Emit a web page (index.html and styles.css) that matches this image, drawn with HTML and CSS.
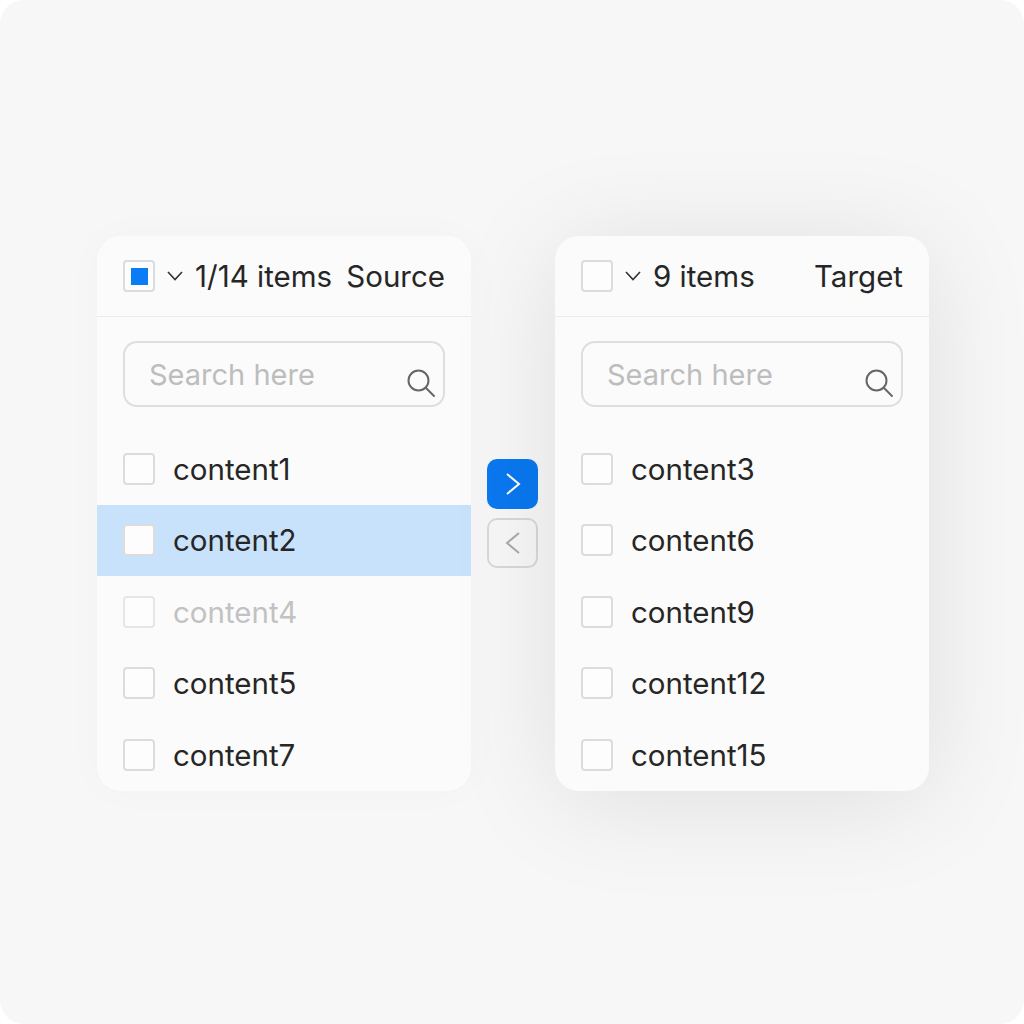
FILE: index.html
```html
<!DOCTYPE html>
<html lang="en">
<head>
    <meta charset="UTF-8">
    <meta name="viewport" content="width=device-width, initial-scale=1.0">
    <title>Transfer</title>
    <link rel="stylesheet" href="styles.css">
</head>
<body>
    <div class="frame">
        <div class="transfer">
            <!-- source list -->
            <div class="panel panel-source">
                <div class="panel-header">
                    <span class="checkbox checked"></span>
                    <svg class="chevron" width="18" height="12" viewBox="0 0 18 12"><path d="M2 2 L9 9.5 L16 2" fill="none" stroke="#333" stroke-width="1.6"/></svg>
                    <span class="count">1/14 items</span>
                    <span class="title">Source</span>
                </div>
                <div class="search">
                    <span class="placeholder">Search here</span>
                    <svg class="search-icon" width="32" height="32" viewBox="0 0 32 32"><circle cx="13.5" cy="13.5" r="10" fill="none" stroke="#666" stroke-width="2"/><path d="M21 21 L29 29" stroke="#666" stroke-width="2" stroke-linecap="round"/></svg>
                </div>
                <ul class="list">
                    <li class="item"><span class="checkbox"></span>content1</li>
                    <li class="item selected"><span class="checkbox"></span>content2</li>
                    <li class="item disabled"><span class="checkbox"></span>content4</li>
                    <li class="item"><span class="checkbox"></span>content5</li>
                    <li class="item"><span class="checkbox"></span>content7</li>
                </ul>
            </div>

            <div class="actions">
                <button class="move move-right">
                    <svg width="20" height="24" viewBox="0 0 20 24"><path d="M4 2 L16 12 L4 22" fill="none" stroke="#fff" stroke-width="2"/></svg>
                </button>
                <button class="move move-left">
                    <svg width="20" height="24" viewBox="0 0 20 24"><path d="M16 2 L4 12 L16 22" fill="none" stroke="#aaa" stroke-width="2"/></svg>
                </button>
            </div>

            <!-- target list -->
            <div class="panel panel-target">
                <div class="panel-header">
                    <span class="checkbox"></span>
                    <svg class="chevron" width="18" height="12" viewBox="0 0 18 12"><path d="M2 2 L9 9.5 L16 2" fill="none" stroke="#333" stroke-width="1.6"/></svg>
                    <span class="count">9 items</span>
                    <span class="title">Target</span>
                </div>
                <div class="search">
                    <span class="placeholder">Search here</span>
                    <svg class="search-icon" width="32" height="32" viewBox="0 0 32 32"><circle cx="13.5" cy="13.5" r="10" fill="none" stroke="#666" stroke-width="2"/><path d="M21 21 L29 29" stroke="#666" stroke-width="2" stroke-linecap="round"/></svg>
                </div>
                <ul class="list">
                    <li class="item"><span class="checkbox"></span>content3</li>
                    <li class="item"><span class="checkbox"></span>content6</li>
                    <li class="item"><span class="checkbox"></span>content9</li>
                    <li class="item"><span class="checkbox"></span>content12</li>
                    <li class="item"><span class="checkbox"></span>content15</li>
                </ul>
            </div>
        </div>
    </div>
</body>
</html>
```

FILE: styles.css
```css
body {
    margin: 0;
    background-color: #ffffff;
    font-family: 'Inter', 'Noto Sans', sans-serif;
    color: #262626;
}
.frame {
    width: 1024px;
    height: 1024px;
    box-sizing: border-box;
    border-radius: 24px;
    background-color: #f7f7f7;
    padding: 236px 0 0 97px;
}
.transfer {
    display: flex;
    align-items: center;
    gap: 16px;
}
.panel {
    width: 374px;
    background-color: #fbfbfb;
    border-radius: 24px;
    overflow: hidden;
}
.panel-source {
    box-shadow: 0 0 40px rgba(0, 0, 0, 0.025);
}
.panel-target {
    margin-left: 1px;
    box-shadow: 0 10px 110px rgba(0, 0, 0, 0.1);
}
.panel-header {
    display: flex;
    align-items: center;
    height: 80px;
    padding: 0 26px;
    border-bottom: 1px solid #ebebeb;
    font-size: 29.5px;
}
.chevron {
    margin: 0 11px 0 11px;
}
.count {
    flex: 1;
}
.checkbox {
    width: 32px;
    height: 32px;
    box-sizing: border-box;
    border: 2px solid #dcdcdc;
    border-radius: 4px;
    background-color: #fdfdfd;
    flex-shrink: 0;
    display: flex;
    align-items: center;
    justify-content: center;
}
.checkbox.checked::after {
    content: "";
    width: 17px;
    height: 17px;
    background-color: #0a7cf5;
}
.search {
    position: relative;
    margin: 24px 26px 26px;
    height: 66px;
    box-sizing: border-box;
    border: 2px solid #dedede;
    border-radius: 14px;
    padding-left: 24px;
    display: flex;
    align-items: center;
    font-size: 29px;
}
.placeholder {
    color: #bdbdbd;
}
.search-icon {
    position: absolute;
    right: 6px;
    bottom: 6px;
}
.list {
    list-style: none;
    margin: 0;
    padding: 0;
}
.item {
    display: flex;
    align-items: center;
    gap: 18px;
    height: 71.5px;
    padding: 0 26px;
    font-size: 29.5px;
}
.item.selected {
    background-color: #c9e2fb;
}
.item.disabled {
    color: #c2c2c2;
}
.item.disabled .checkbox {
    border-color: #e6e6e6;
}
.actions {
    display: flex;
    flex-direction: column;
    gap: 9px;
}
.move {
    width: 51px;
    height: 50px;
    border-radius: 10px;
    display: flex;
    align-items: center;
    justify-content: center;
    padding: 0;
}
.move-right {
    background-color: #0a78f0;
    border: none;
}
.move-left {
    background-color: transparent;
    border: 2px solid #d8d8d8;
}
```
